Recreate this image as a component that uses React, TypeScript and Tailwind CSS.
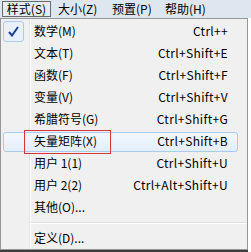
import React from "react";

const items: { label: string; key: string; checked?: boolean; hl?: boolean }[] = [
  { label: "数学(M)", key: "Ctrl++", checked: true },
  { label: "文本(T)", key: "Ctrl+Shift+E" },
  { label: "函数(F)", key: "Ctrl+Shift+F" },
  { label: "变量(V)", key: "Ctrl+Shift+V" },
  { label: "希腊符号(G)", key: "Ctrl+Shift+G" },
  { label: "矢量矩阵(X)", key: "Ctrl+Shift+B", hl: true },
  { label: "用户 1(1)", key: "Ctrl+Shift+U" },
  { label: "用户 2(2)", key: "Ctrl+Alt+Shift+U" },
  { label: "其他(O)...", key: "" },
];

function Row({ label, keyText, checked, hl }: { label: string; keyText: string; checked?: boolean; hl?: boolean }) {
  return (
    <div className="relative h-[22px] flex items-center">
      {hl && (
        <div className="absolute left-[2px] top-[2px] w-[235px] h-[20px] rounded-[3px] border border-[#a9cbee] bg-gradient-to-b from-[#f3f8fd] to-[#e3eefb]" />
      )}
      {hl && <div className="absolute left-[23px] top-0 w-[87px] h-[24px] border border-[#d9343c]" />}
      {checked && (
        <div className="absolute left-[2px] top-[1px] w-[21px] h-[21px] rounded-[3px] border border-[#a9cbee] bg-[#e8f0fa] flex items-center justify-center">
          <svg width="11" height="11" viewBox="0 0 11 11">
            <path d="M1 6 L4 9.5 L10 1" stroke="#1c3f97" strokeWidth="2" fill="none" />
          </svg>
        </div>
      )}
      <span className="relative ml-[33px] flex-1">{label}</span>
      <span className="relative mr-[19px] tracking-[0.3px]">{keyText}</span>
    </div>
  );
}

export default function App() {
  return (
    <div
      className="w-[251px] h-[252px] overflow-hidden bg-[#3c3c3c] text-[12px] leading-none text-black"
      style={{ fontFamily: '"Noto Sans CJK SC", "Noto Sans", sans-serif' }}
    >
      <div className="h-[18px] bg-[#dee6f0] flex items-center">
        <div className="ml-[2px] h-[16px] w-[49px] border border-[#6a6a6a] bg-[#e6ecf3] flex items-center justify-center">样式(S)</div>
        <span className="ml-[7px] w-[54px]">大小(Z)</span>
        <span className="w-[53px]">预置(P)</span>
        <span>帮助(H)</span>
      </div>
      <div className="flex h-[234px]">
        <div className="w-[248px] h-[232px] border border-[#979797] bg-[#f0f0f0] relative pt-[1px]">
          <div className="absolute left-[28px] top-0 bottom-0 w-[1px] bg-[#e2e3e3]" />
          <div className="absolute left-[29px] top-0 bottom-0 w-[1px] bg-white" />
          {items.map((it) => (
            <Row key={it.label} label={it.label} keyText={it.key} checked={it.checked} hl={it.hl} />
          ))}
          <div className="h-[9px] flex flex-col justify-center pl-[30px]">
            <div className="h-[1px] bg-[#e0e0e0]" />
            <div className="h-[1px] bg-white" />
          </div>
          <Row label="定义(D)..." keyText="" />
        </div>
        <div className="flex-1 bg-white" />
      </div>
    </div>
  );
}
